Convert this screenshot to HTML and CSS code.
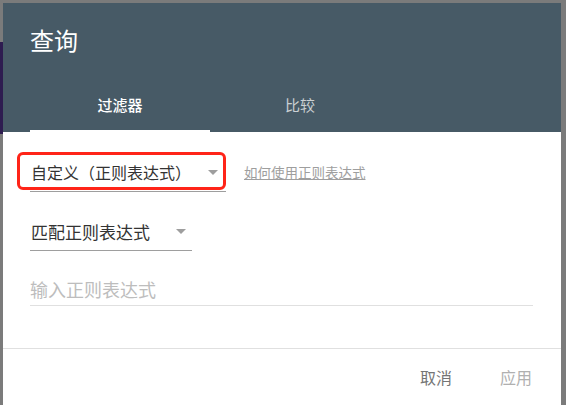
FILE: index.html
```html
<!DOCTYPE html>
<html lang="zh">
<head>
<meta charset="utf-8">
<title>查询</title>
<link rel="stylesheet" href="styles.css">
</head>
<body>
<div class="dialog">
  <header class="head">
    <h1 class="title">查询</h1>
    <nav class="tabs">
      <div class="tab active">过滤器</div>
      <div class="tab">比较</div>
    </nav>
  </header>
  <main class="content">
    <div class="row">
      <div class="select sel-type">
        <span class="sel-text">自定义（正则表达式）</span>
        <span class="arrow"></span>
        <span class="highlight"></span>
      </div>
      <a class="help" href="#">如何使用正则表达式</a>
    </div>
    <div class="select sel-match">
      <span class="sel-text">匹配正则表达式</span>
      <span class="arrow"></span>
    </div>
    <div class="input">输入正则表达式</div>
  </main>
  <footer class="foot">
    <button class="btn cancel">取消</button>
    <button class="btn apply">应用</button>
  </footer>
</div>
</body>
</html>
```

FILE: styles.css
```css
* { box-sizing: border-box; }
html, body { height: 100%; }
body {
  margin: 0;
  overflow: hidden;
  font-family: "Noto Sans CJK SC", "Noto Sans", sans-serif;
  background:
    linear-gradient(to bottom, transparent 42px, #2e1c50 42px, #2e1c50 134px, transparent 134px) no-repeat 0 0 / 3px 100%,
    #7b7b7b;
}
.dialog {
  margin: 3px 0 0 3px;
  width: 558px;
  height: 402px;
  background: #fff;
  display: flex;
  flex-direction: column;
}
.head {
  background: #475a66;
  height: 129px;
  padding: 0 0 0 27px;
  display: flex;
  flex-direction: column;
}
.title {
  margin: 0;
  padding-top: 21px;
  font-size: 24px;
  font-weight: 400;
  line-height: 32px;
  color: #fff;
}
.tabs {
  margin-top: auto;
  display: flex;
  height: 48px;
}
.tab {
  width: 180px;
  display: flex;
  align-items: center;
  justify-content: center;
  font-size: 15px;
  color: rgba(255,255,255,0.72);
  border-bottom: 2px solid transparent;
  padding-bottom: 5px;
}
.tab.active {
  color: #fff;
  font-weight: 500;
  border-bottom-color: #fff;
}
.content {
  padding: 21px 0 0 27px;
  display: flex;
  flex-direction: column;
  flex: 1;
}
.row {
  display: flex;
  align-items: center;
}
.select {
  position: relative;
  height: 39px;
  display: flex;
  align-items: center;
  border-bottom: 1px solid #9e9e9e;
  padding-left: 1px;
  font-size: 16px;
  color: #333;
}
.sel-type { width: 196px; }
.sel-match { width: 162px; margin-top: 20px; font-size: 17px; }
.sel-text { flex: 1; }
.arrow {
  width: 0;
  height: 0;
  border-left: 5.5px solid transparent;
  border-right: 5.5px solid transparent;
  border-top: 5.5px solid #9e9e9e;
  margin-right: 8px;
}
.sel-match .arrow { margin-right: 6px; }
.highlight {
  position: absolute;
  left: -13px;
  top: -1px;
  width: 209px;
  height: 38px;
  border: 3px solid #ff2418;
  border-radius: 6px;
}
.help {
  margin-left: 18px;
  font-size: 13.5px;
  color: #9e9e9e;
  text-decoration: underline;
  padding-bottom: 1px;
}
.input {
  margin-top: 19px;
  width: 503px;
  height: 36px;
  display: flex;
  align-items: center;
  padding-top: 3px;
  font-size: 18px;
  color: #bdbdbd;
  border-bottom: 1px solid #e0e0e0;
}
.foot {
  border-top: 1px solid #e0e0e0;
  height: 57px;
  display: flex;
  justify-content: flex-end;
  align-items: center;
  padding: 0 29px 0 0;
  gap: 48px;
}
.btn {
  background: none;
  border: 0;
  padding: 0;
  font-family: inherit;
  font-size: 16px;
  color: #757575;
  cursor: pointer;
}
.btn.apply { color: #b0b0b0; }
```
